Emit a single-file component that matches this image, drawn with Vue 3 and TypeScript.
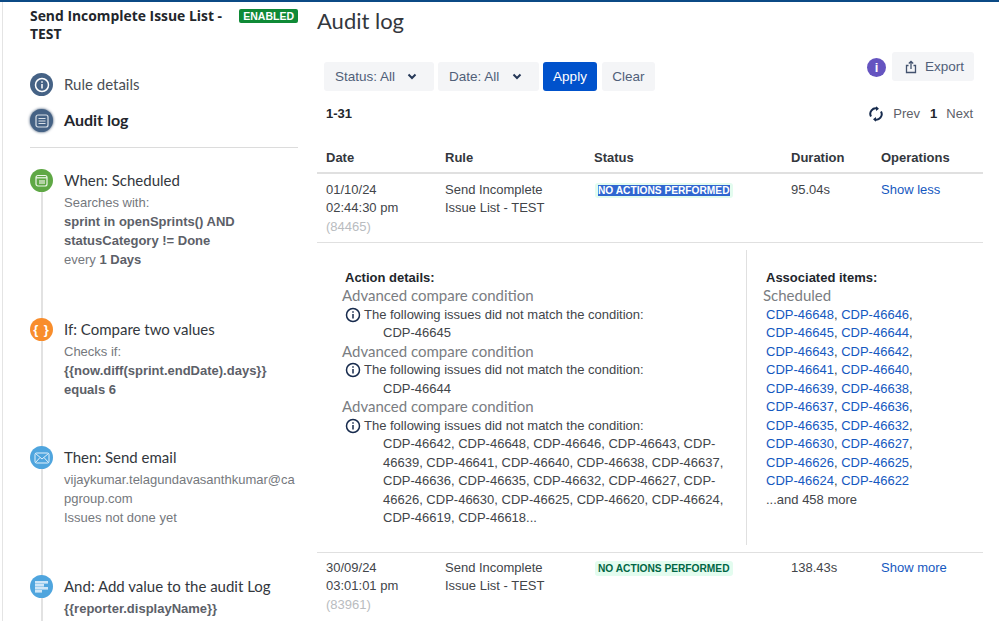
<script setup lang="ts">
interface Step {
  title: string
  color: string
  icon: string
  lines: { text: string; strong?: boolean }[][]
}

// left rail steps
const steps: Step[] = [
  {
    title: 'When: Scheduled',
    color: '#5fa845',
    icon: 'calendar',
    lines: [
      [{ text: 'Searches with:' }],
      [{ text: 'sprint in openSprints() AND', strong: true }],
      [{ text: 'statusCategory != Done', strong: true }],
      [{ text: 'every ' }, { text: '1 Days', strong: true }]
    ]
  },
  {
    title: 'If: Compare two values',
    color: '#f88d2c',
    icon: 'braces',
    lines: [
      [{ text: 'Checks if:' }],
      [{ text: '{{now.diff(sprint.endDate).days}}', strong: true }],
      [{ text: 'equals 6', strong: true }]
    ]
  },
  {
    title: 'Then: Send email',
    color: '#4fa5de',
    icon: 'mail',
    lines: [
      [{ text: 'vijaykumar.telagundavasanthkumar@capgroup.com' }],
      [{ text: 'Issues not done yet' }]
    ]
  },
  {
    title: 'And: Add value to the audit Log',
    color: '#4fa5de',
    icon: 'log',
    lines: [[{ text: '{{reporter.displayName}}', strong: true }]]
  }
]

// the long list wraps inside issue keys, so allow a break after each hyphen
const conditions = [
  'CDP-46645',
  'CDP-46644',
  'CDP-46642, CDP-46648, CDP-46646, CDP-46643, CDP-46639, CDP-46641, CDP-46640, CDP-46638, CDP-46637, CDP-46636, CDP-46635, CDP-46632, CDP-46627, CDP-46626, CDP-46630, CDP-46625, CDP-46620, CDP-46624, CDP-46619, CDP-46618...'
].map(s => s.replace(/-/g, '-\u200b'))

const associated = [
  'CDP-46648', 'CDP-46646', 'CDP-46645', 'CDP-46644', 'CDP-46643', 'CDP-46642',
  'CDP-46641', 'CDP-46640', 'CDP-46639', 'CDP-46638', 'CDP-46637', 'CDP-46636',
  'CDP-46635', 'CDP-46632', 'CDP-46630', 'CDP-46627', 'CDP-46626', 'CDP-46625',
  'CDP-46624', 'CDP-46622'
]
</script>

<template>
  <div class="page">
    <aside class="side">
      <div class="side-head">
        <h2 class="rule-name">Send Incomplete Issue List - TEST</h2>
        <span class="enabled">ENABLED</span>
      </div>

      <nav class="nav">
        <div class="nav-item">
          <span class="dot navy">
            <svg width="16" height="16" viewBox="0 0 16 16" fill="none" stroke="#fff" stroke-width="1.5">
              <circle cx="8" cy="8" r="6.5" />
              <path d="M8 7v4.5M8 4.3v1.5" />
            </svg>
          </span>
          <span class="nav-label">Rule details</span>
        </div>
        <div class="nav-item active">
          <span class="dot navy glow">
            <svg width="16" height="16" viewBox="0 0 16 16" fill="none" stroke="#d9e0e8" stroke-width="1.2">
              <rect x="2" y="2" width="12" height="12" rx="2" />
              <path d="M4.5 5.5h7M4.5 8h7M4.5 10.5h7" />
            </svg>
          </span>
          <span class="nav-label">Audit log</span>
        </div>
      </nav>

      <div class="steps">
        <div v-for="step in steps" :key="step.title" class="step">
          <span class="dot" :style="{ background: step.color }">
            <svg v-if="step.icon === 'calendar'" width="13" height="13" viewBox="0 0 13 13">
              <rect x="1" y="1.5" width="11" height="10.5" rx="2" fill="none" stroke="#eef6ea" stroke-width="1.2" />
              <path d="M1 3.2h11v1.2H1z" fill="#eef6ea" />
              <rect x="4" y="6" width="6" height="4" fill="#b5d3a6" />
            </svg>
            <span v-else-if="step.icon === 'braces'" class="braces">{ }</span>
            <svg v-else-if="step.icon === 'mail'" width="16" height="12" viewBox="0 0 16 12" fill="none" stroke="#e2f1fc" stroke-width="1">
              <rect x="1" y="1" width="14" height="10" rx="1.5" />
              <path d="M1.5 1.5 8 7l6.5-5.5M1.5 10.5 6 5.5M14.5 10.5 10 5.5" />
            </svg>
            <svg v-else width="15" height="12" viewBox="0 0 15 12" fill="#cfe6f7">
              <rect x="1" y="0" width="13" height="2.6" />
              <rect x="1" y="3" width="9" height="2.6" />
              <rect x="1" y="6" width="13" height="2.6" />
              <rect x="1" y="9" width="7" height="2.6" />
            </svg>
          </span>
          <div class="step-body">
            <div class="step-title">{{ step.title }}</div>
            <div v-for="(line, i) in step.lines" :key="i" class="step-line">
              <template v-for="part in line" :key="part.text">
                <b v-if="part.strong">{{ part.text }}</b>
                <template v-else>{{ part.text }}</template>
              </template>
            </div>
          </div>
        </div>
      </div>
    </aside>

    <main class="main">
      <h1 class="title">Audit log</h1>

      <div class="toolbar">
        <div class="filters">
          <button class="btn select status">Status: All
            <svg width="10" height="7" viewBox="0 0 10 7" fill="none" stroke="#253858" stroke-width="2"><path d="M1.5 1.5 5 5l3.5-3.5" /></svg>
          </button>
          <button class="btn select date">Date: All
            <svg width="10" height="7" viewBox="0 0 10 7" fill="none" stroke="#253858" stroke-width="2"><path d="M1.5 1.5 5 5l3.5-3.5" /></svg>
          </button>
          <button class="btn primary">Apply</button>
          <button class="btn clear">Clear</button>
        </div>
        <div class="export-wrap">
          <span class="info-badge">i</span>
          <button class="btn export">
            <svg width="12" height="14" viewBox="0 0 12 14" fill="none" stroke="#42526e" stroke-width="1.3">
              <path d="M3.5 5.5H1.5v7h9v-7H8.5M6 9V1.5M3.8 3.5 6 1.3l2.2 2.2" />
            </svg>
            Export
          </button>
        </div>
      </div>

      <div class="pager">
        <b>1-31</b>
        <div class="pager-right">
          <svg width="14" height="16" viewBox="0 0 14 16" fill="none" stroke="#172b4d" stroke-width="2">
            <path d="M2 10.5A5.5 5.5 0 0 1 8.5 2.6M12 5.5A5.5 5.5 0 0 1 5.5 13.4" />
            <path d="M7 .3l3 2.4-3 2.3zM7 15.7l-3-2.4 3-2.3z" fill="#172b4d" stroke="none" />
          </svg>
          <span class="muted">Prev</span>
          <b>1</b>
          <span class="muted">Next</span>
        </div>
      </div>

      <div class="row head">
        <div>Date</div>
        <div>Rule</div>
        <div>Status</div>
        <div>Duration</div>
        <div>Operations</div>
      </div>

      <div class="row entry open">
        <div>01/10/24<br />02:44:30 pm<br /><span class="faint">(84465)</span></div>
        <div>Send Incomplete<br />Issue List - TEST</div>
        <div><span class="lozenge"><span class="selected">NO ACTIONS PERFORMED</span></span></div>
        <div>95.04s</div>
        <div><a class="link">Show less</a></div>
      </div>

      <div class="details">
        <div class="actions">
          <div class="details-label first">Action details:</div>
          <template v-for="(issues, i) in conditions" :key="i">
            <div class="cond">Advanced compare condition</div>
            <div class="cond-msg">
              <svg width="16" height="16" viewBox="0 0 16 16" fill="none" stroke="#172b4d" stroke-width="1.5">
                <circle cx="8" cy="8" r="6.5" />
                <path d="M8 7v4.5M8 4.3v1.5" />
              </svg>
              The following issues did not match the condition:
            </div>
            <div class="cond-issues">{{ issues }}</div>
          </template>
        </div>
        <div class="assoc">
          <div class="details-label">Associated items:</div>
          <div class="cond sched">Scheduled</div>
          <div class="assoc-list">
            <template v-for="(key, i) in associated" :key="key"><a class="link">{{ key }}</a><template v-if="i < associated.length - 1">, </template></template>
          </div>
          <div>...and 458 more</div>
        </div>
      </div>

      <div class="row entry second">
        <div>30/09/24<br />03:01:01 pm<br /><span class="faint">(83961)</span></div>
        <div>Send Incomplete<br />Issue List - TEST</div>
        <div><span class="lozenge plain">NO ACTIONS PERFORMED</span></div>
        <div>138.43s</div>
        <div><a class="link">Show more</a></div>
      </div>
    </main>
  </div>
</template>

<style scoped>
.page {
  width: 999px;
  height: 621px;
  box-sizing: border-box;
  overflow: hidden;
  display: flex;
  background: #fff;
  border-top: 2px solid #0b4a85;
  font-family: "Liberation Sans", Arial, sans-serif;
  font-size: 13px;
  color: #42454a;
}

.side {
  width: 317px;
  flex: none;
  box-sizing: border-box;
  padding: 5px 19px 0 30px;
  background: linear-gradient(to right, #fff 2px, #e4e4e4 2px, #e4e4e4 3px, #fff 3px);
}

.side-head {
  display: flex;
  justify-content: space-between;
  align-items: flex-start;
}

.rule-name {
  margin: 0;
  width: 205px;
  font-family: "Open Sans", sans-serif;
  font-size: 13.9px;
  line-height: 18px;
  font-weight: 700;
  color: #22262c;
}

.enabled {
  margin-top: 2px;
  padding: 0 4px;
  height: 14px;
  line-height: 14px;
  border-radius: 2px;
  background: #0f8a36;
  color: #fff;
  font-size: 10.5px;
  font-weight: 700;
}

.nav {
  margin-top: 30px;
  padding-bottom: 15px;
  border-bottom: 1px solid #dcdcdc;
  display: flex;
  flex-direction: column;
  gap: 13px;
}

.nav-item {
  display: flex;
  align-items: center;
  gap: 11px;
  font-family: "Lato", sans-serif;
  font-size: 15px;
  color: #4a4e55;
}

.nav-item.active {
  font-size: 16px;
  font-weight: 700;
  color: #22262c;
}

.nav-label {
  padding-bottom: 2px;
}

.dot {
  width: 23px;
  height: 23px;
  flex: none;
  border-radius: 50%;
  display: flex;
  align-items: center;
  justify-content: center;
}

.navy {
  background: #456285;
}

.glow {
  box-shadow: 0 0 3px #2c4464;
}

.steps {
  margin-top: 21px;
  background: linear-gradient(to right, transparent 11px, #e2e2e2 11px, #e2e2e2 13px, transparent 13px);
}

.step {
  display: flex;
  gap: 11px;
  min-height: 129px;
}

.step:nth-child(1) {
  min-height: 149px;
}

.step:nth-child(2) {
  min-height: 128px;
}

.step-body {
  min-width: 0;
  background: #fff;
  flex: 1;
}

.step-title {
  font-family: "Lato", sans-serif;
  font-size: 15px;
  line-height: 22px;
  color: #33373d;
  margin-bottom: 1.5px;
}

.step-line {
  font-size: 13px;
  line-height: 19px;
  color: #75787d;
  word-break: break-all;
}

.step-line b {
  color: #5c6068;
}

.braces {
  color: #fff;
  font-weight: 700;
  font-size: 13px;
  letter-spacing: 1px;
}

.main {
  flex: 1;
  min-width: 0;
  padding-right: 16px;
}

.title {
  margin: 3px 0 0;
  font-family: "Lato", sans-serif;
  font-weight: 400;
  font-size: 22px;
  line-height: 32px;
  color: #33373d;
}

.toolbar {
  display: flex;
  justify-content: space-between;
  align-items: flex-start;
  margin-top: 15px;
  padding: 0 9px 0 7px;
}

.filters {
  display: flex;
  gap: 4px;
  margin-top: 10px;
}

.btn {
  height: 29px;
  box-sizing: border-box;
  border: 0;
  border-radius: 3px;
  background: #f4f5f7;
  color: #505f79;
  font: inherit;
  font-size: 13.5px;
  padding: 0 11px;
  display: inline-flex;
  align-items: center;
}

.select {
  justify-content: space-between;
}

.status {
  width: 110px;
}

.date {
  width: 101px;
}

.select svg {
  margin: 0 6px 0 0;
}

.primary {
  background: #0052cc;
  color: #fff;
  width: 54px;
  justify-content: center;
  padding: 0;
}

.clear {
  margin-left: 1px;
  width: 53px;
  justify-content: center;
  padding: 0;
}

.export-wrap {
  display: flex;
  gap: 6px;
  margin-top: 0;
}

.info-badge {
  width: 19px;
  height: 19px;
  margin-top: 6px;
  border-radius: 50%;
  background: #6554c0;
  color: #fff;
  font-weight: 700;
  font-size: 13px;
  text-align: center;
  line-height: 19px;
}

.export {
  width: 82px;
  gap: 8px;
  padding: 0 0 0 13px;
}

.pager {
  display: flex;
  justify-content: space-between;
  padding: 0 10px 0 9px;
  margin-top: 13px;
  line-height: 20px;
  color: #22262c;
}

.pager-right {
  display: flex;
  align-items: center;
  gap: 10px;
}

.pager-right b {
  margin-right: -1px;
}

.muted {
  color: #5c6068;
}

.row {
  display: grid;
  grid-template-columns: 119px 149px 197px 90px 1fr;
  padding-left: 9px;
  line-height: 18.5px;
}

.head {
  margin-top: 25px;
  padding-bottom: 4px;
  border-bottom: 2px solid #e0e0e0;
  font-weight: 700;
  color: #33373d;
}

.entry {
  padding-top: 7px;
  height: 69px;
  box-sizing: border-box;
}

.entry.open {
  border-bottom: 1px solid #e0e0e0;
}

.entry.second {
  padding-top: 6px;
}

.faint {
  color: #b9bcc0;
}

.link {
  color: #1558c0;
}

.lozenge {
  display: inline-block;
  background: #e3fcef;
  border-radius: 3px;
  padding: 0 3px;
  margin-left: 1px;
  line-height: 15px;
  font-size: 10.2px;
  font-weight: 700;
  color: #006644;
}

.selected {
  background: #2f66d0;
  color: #fff;
}

.details {
  height: 310px;
  box-sizing: border-box;
  border-bottom: 1px solid #e0e0e0;
  display: flex;
  padding-top: 7px;
  padding-bottom: 7px;
}

.actions {
  width: 430px;
  box-sizing: border-box;
  padding: 19px 14px 0 25px;
  border-right: 1px solid #e0e0e0;
  line-height: 18.5px;
}

.details-label {
  font-weight: 700;
  color: #22262c;
}

.first {
  padding-left: 3px;
}

.cond {
  font-family: "Lato", sans-serif;
  font-size: 15px;
  line-height: 18.5px;
  margin-top: -1px;
  margin-bottom: 1px;
  color: #7a7d82;
}

.sched {
  margin-left: -3px;
}

.cond-msg {
  display: flex;
  align-items: center;
  gap: 3px;
  padding-left: 3px;
}

.cond-issues {
  padding-left: 41px;
}

.assoc {
  flex: 1;
  padding: 19px 0 0 19px;
  line-height: 18.5px;
}

.assoc-list {
  width: 170px;
}
</style>

<style>
html,
body {
  margin: 0;
  background: #fff;
}
</style>
